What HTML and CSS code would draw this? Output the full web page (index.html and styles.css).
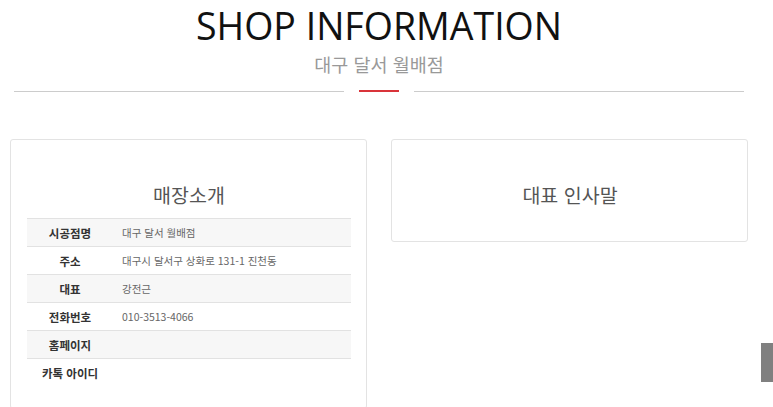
FILE: index.html
```html
<!DOCTYPE html>
<html lang="ko">
<head>
<meta charset="utf-8">
<title>SHOP INFORMATION</title>
<link rel="stylesheet" href="styles.css">
</head>
<body>
<div class="page">
  <header class="head">
    <h1 class="title">SHOP INFORMATION</h1>
    <p class="sub">대구 달서 월배점</p>
    <div class="rule">
      <span class="rule-line"></span>
      <span class="rule-red"></span>
      <span class="rule-line"></span>
    </div>
  </header>
  <div class="cards">
    <section class="card">
      <h2 class="card-title">매장소개</h2>
      <table class="info">
        <tr class="odd"><th>시공점명</th><td>대구 달서 월배점</td></tr>
        <tr><th>주소</th><td>대구시 달서구 상화로 131-1 진천동</td></tr>
        <tr class="odd"><th>대표</th><td>강전근</td></tr>
        <tr><th>전화번호</th><td>010-3513-4066</td></tr>
        <tr class="odd"><th>홈페이지</th><td></td></tr>
        <tr class="last"><th>카톡 아이디</th><td></td></tr>
      </table>
    </section>
    <section class="card card-short">
      <h2 class="card-title">대표 인사말</h2>
    </section>
  </div>
</div>
<div class="top-btn"></div>
</body>
</html>
```
FILE: styles.css
```css
html, body {
  margin: 0;
  padding: 0;
  background: #fff;
  overflow: hidden;
}
body {
  font-family: "Open Sans", "Noto Sans CJK KR", sans-serif;
  color: #333;
}
.page {
  width: 758px;
}
.head {
  text-align: center;
  padding-top: 6px;
}
.title {
  margin: 0;
  font-size: 37.5px;
  font-weight: 400;
  line-height: 40px;
  color: #111;
}
.sub {
  margin: 7px 0 0;
  font-family: "Noto Sans CJK KR", sans-serif;
  font-size: 18.5px;
  line-height: 22px;
  color: #999;
}
.rule {
  display: flex;
  align-items: center;
  margin: 14px 14px 0 14px;
  gap: 15px;
  height: 4px;
}
.rule-line {
  flex: 1;
  height: 1px;
  background: #ccc;
}
.rule-red {
  width: 40px;
  height: 2px;
  background: #d9343a;
  margin-top: -1px;
}
.cards {
  display: flex;
  align-items: flex-start;
  gap: 24px;
  margin: 46px 0 0 10px;
}
.card {
  width: 324px;
  border: 1px solid #e3e3e3;
  border-radius: 3px;
  padding: 40px 15px 21px 16px;
  box-sizing: content-box;
}
.card-short {
  padding-bottom: 31px;
}
.card-title {
  margin: 0 0 8px;
  font-family: "Noto Sans CJK KR", sans-serif;
  font-size: 19.5px;
  font-weight: 400;
  line-height: 30px;
  text-align: center;
  color: #555;
}
.card-short .card-title {
  margin: 0;
}
.info {
  width: 100%;
  border-collapse: collapse;
  font-family: "Noto Sans CJK KR", sans-serif;
  font-size: 10.5px;
}
.info tr {
  border-top: 1px solid #e2e2e2;
  height: 28px;
}
.info tr.odd {
  background: #f7f7f7;
}
.info th {
  width: 86px;
  padding: 0;
  font-size: 11.5px;
  font-weight: 700;
  color: #333;
  text-align: center;
}
.info td {
  padding: 0 0 0 9px;
  color: #666;
  text-align: left;
}
.top-btn {
  position: fixed;
  left: 761px;
  top: 343px;
  width: 12px;
  height: 39px;
  background: #808080;
}
```
